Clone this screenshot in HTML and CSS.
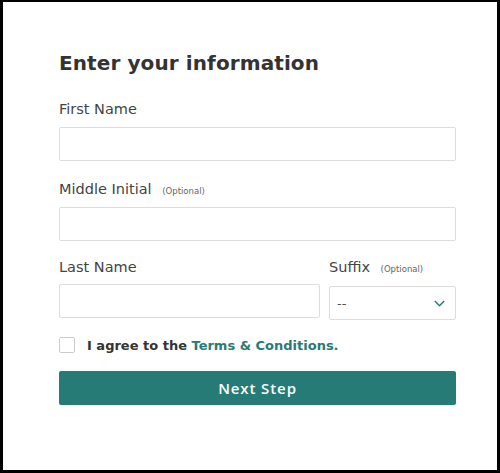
FILE: index.html
```html
<!DOCTYPE html>
<html>
<head>
<meta charset="utf-8">
<link rel="stylesheet" href="styles.css">
</head>
<body>
<div class="frame">
  <form class="form">
    <h1 class="title">Enter your information</h1>
    <div class="field f-first">
      <label class="label">First Name</label>
      <div class="input"></div>
    </div>
    <div class="field f-middle">
      <label class="label">Middle Initial <span class="opt">(Optional)</span></label>
      <div class="input"></div>
    </div>
    <div class="row">
      <div class="field last">
        <label class="label">Last Name</label>
        <div class="input"></div>
      </div>
      <div class="field suffix">
        <label class="label">Suffix <span class="opt">(Optional)</span></label>
        <div class="input select">
          <span class="sel-text">--</span>
          <svg class="chev" width="11" height="7" viewBox="0 0 11 7"><path d="M0.8 1 L5.5 5.8 L10.2 1" fill="none" stroke="#2a7d78" stroke-width="1.5"/></svg>
        </div>
      </div>
    </div>
    <div class="agree">
      <span class="box"></span>
      <span class="agree-text">I agree to the <span class="link">Terms &amp; Conditions.</span></span>
    </div>
    <div class="btn">Next Step</div>
  </form>
</div>
</body>
</html>
```
FILE: styles.css
```css
html, body { margin: 0; padding: 0; background: #fff; }
.frame {
  width: 500px; height: 473px; box-sizing: border-box;
  border-style: solid; border-color: #000;
  border-width: 2px 3px 3px 3px;
  padding: 47px 41px 0 56px;
  font-family: "DejaVu Sans", sans-serif;
  color: #444;
}
.form { display: flex; flex-direction: column; }
.title { margin: 0 0 23px 0; font-size: 20px; font-weight: bold; color: #333; line-height: 28px; letter-spacing: 0.1px; }
.field { display: flex; flex-direction: column; }
.f-first { margin-bottom: 19px; }
.f-middle { margin-bottom: 17px; }
.label { font-size: 14.5px; line-height: 18px; height: 18px; color: #444; margin-bottom: 9px; white-space: nowrap; }
.row .label { margin-bottom: 8px; }
.opt { font-size: 8.5px; line-height: 1; color: #666; margin-left: 6px; }
.input { height: 34px; box-sizing: border-box; border: 1px solid #ddd; border-radius: 2px; background: #fff; }
.row { display: flex; gap: 9px; }
.last { width: 261px; }
.suffix { width: 127px; }
.suffix .input { margin-top: 2px; }
.select { display: flex; align-items: center; justify-content: space-between; padding: 0 10px 0 7px; }
.sel-text { font-size: 13px; color: #555; }
.agree { display: flex; align-items: center; gap: 12px; margin-top: 17px; height: 16px; }
.box { width: 16px; height: 16px; box-sizing: border-box; border: 1px solid #ccc; border-radius: 2px; }
.agree-text { font-size: 13px; font-weight: bold; color: #333; }
.link { color: #277b76; }
.btn { margin-top: 18px; height: 34px; background: #277b76; border-radius: 2px; color: #fff; font-family: "Open Sans", "DejaVu Sans", sans-serif; font-size: 15px; font-weight: 600; letter-spacing: 0.9px; display: flex; align-items: center; justify-content: center; }
```
